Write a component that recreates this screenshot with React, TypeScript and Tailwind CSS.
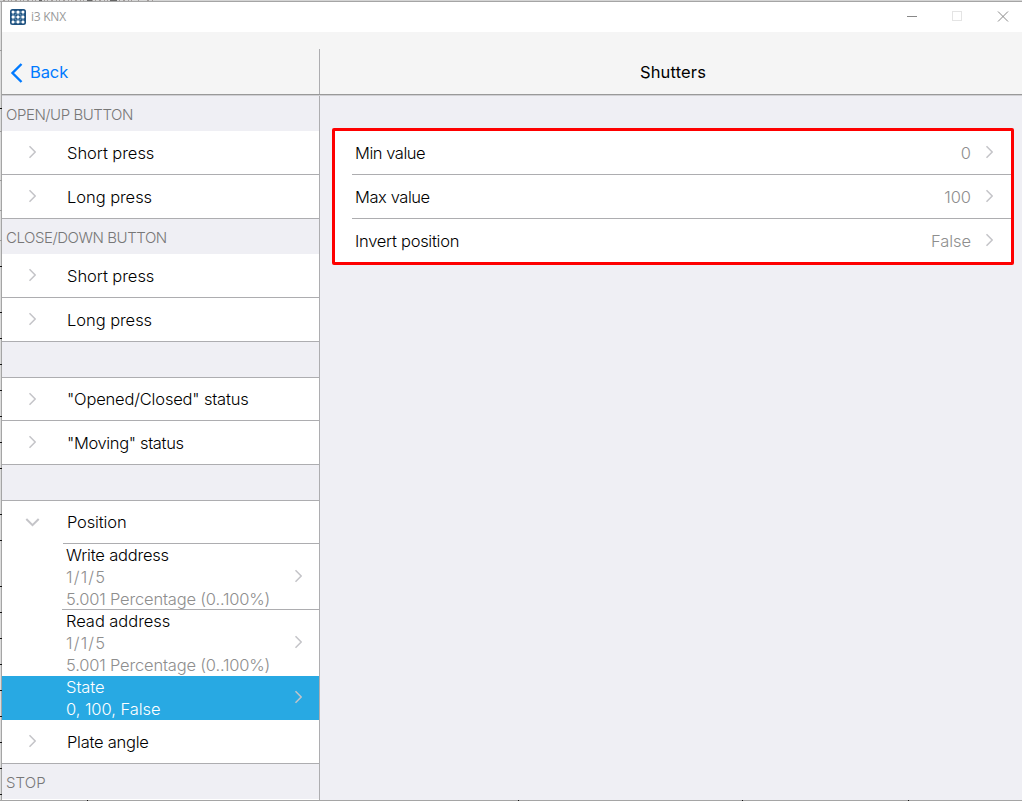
import React from "react";

const F = "font-['Inter',sans-serif] font-light";

function Chevron({ dir = "right", className = "" }: { dir?: "right" | "down"; className?: string }) {
  return dir === "right" ? (
    <svg width="8" height="14" viewBox="0 0 8 14" fill="none" className={"shrink-0 " + className}>
      <path d="M1.5 1.2 L7.2 7 L1.5 12.8" stroke="#c4c4c8" strokeWidth="1.5" />
    </svg>
  ) : (
    <svg width="15" height="9" viewBox="0 0 15 9" fill="none" className={"shrink-0 " + className}>
      <path d="M1.3 1 L7.5 7.2 L13.7 1" stroke="#c4c4c8" strokeWidth="2" />
    </svg>
  );
}

function Section({ title, className }: { title: string; className: string }) {
  return (
    <div className="flex h-[35px] shrink-0 items-center bg-[#efeff4] pl-1 text-[15px] text-[#777]">
      <span className={"pt-[3px] " + className}>{title}</span>
    </div>
  );
}

function Row({ label, className = "h-11", text = "pt-[2px]" }: { label: string; className?: string; text?: string }) {
  return (
    <div className={"flex shrink-0 items-center border-b border-[#adadb0] bg-white " + className}>
      <Chevron className="mb-px ml-[26px]" />
      <span className={"ml-[31px] text-black " + text}>{label}</span>
    </div>
  );
}

function Address({ title, titleClass, border }: { title: string; titleClass: string; border: string }) {
  return (
    <div className={"ml-[60px] flex h-[66px] shrink-0 items-center border-b bg-white leading-[22px] text-[#8e8e8e] " + border}>
      <div className="grow pl-1 pt-px">
        <div className={"text-black " + titleClass}>{title}</div>
        <div className="tracking-[1.2px]">1/1/5</div>
        <div className="tracking-[-0.18px]">5.001 Percentage (0..100%)</div>
      </div>
      <Chevron className="mb-px mr-[17px]" />
    </div>
  );
}

function Setting({ label, value, text, line = true }: { label: string; value: string; text: string; line?: boolean }) {
  return (
    <div className={"ml-[17px] flex h-11 items-center border-b pl-[3px] pr-[18px] " + (line ? "border-[#adadb0]" : "border-transparent")}>
      <span className={"grow pt-[2px] text-black " + text}>{label}</span>
      <span className="mr-[14px] pt-[2px] text-[#8e8e8e]">{value}</span>
      <Chevron className="mb-px" />
    </div>
  );
}

const ticks = [108, 266, 312, 338, 364, 390, 416, 442, 468, 514, 540, 586, 612, 638, 664, 690, 716, 742, 768, 794];
const faint = [50, 131, 180, 210, 240];

export default function App() {
  return (
    <div className={"flex h-[801px] w-[1022px] flex-col overflow-hidden bg-white text-[16.5px] tracking-[-0.05px] " + F}>
      <svg width="1022" height="2" className="block shrink-0" shapeRendering="crispEdges">
        <rect width="1022" height="1" fill="#d5d5d5" />
        <path d="M3 .5H132M138 .5h1M147 .5h8" stroke="#a09a98" strokeDasharray="2 3 1 2 1 3" />
        <path d="M39 .5h3M87 .5h5M110 .5h7" stroke="#666" />
        <rect y="1" width="1022" height="1" fill="#a5a5a5" />
      </svg>
      <div className="flex min-h-0 grow">
        <svg width="2" height="798" className="block shrink-0" shapeRendering="crispEdges">
          <rect width="1" height="798" fill="#dcdcdc" />
          <rect x="1" width="1" height="798" fill="#a5a5a5" />
          {ticks.map((y) => <rect key={y} y={y - 2} width="2" height="1" fill="#111" />)}
          {faint.map((y) => <rect key={y} y={y - 2} width="2" height="1" fill="#999" />)}
        </svg>
        <div className="flex min-w-0 grow flex-col">
          <div className="flex h-[30px] shrink-0 items-center bg-white pl-2">
            <svg width="16" height="16" viewBox="0 0 16 16" className="-mt-px">
              <rect width="16" height="16" rx="2.5" fill="#1f5280" />
              <path d="M3 3h10v10H3zM8 3v10M3 8h10" stroke="#7fa6c4" fill="none" />
              <circle cx="8" cy="8" r="3.6" stroke="#7fa6c4" strokeWidth="0.8" fill="none" />
              {[3, 8, 13].map((x) => [3, 8, 13].map((y) => <circle key={x + "-" + y} cx={x} cy={y} r="1.5" fill="#fff" />))}
            </svg>
            <span className="-mt-px ml-[5px] grow font-['Open_Sans',sans-serif] text-[12px] font-normal tracking-[-0.25px] text-[#999]">i3 KNX</span>
            <svg width="102" height="12" viewBox="0 0 102 12" fill="none" className="mr-[13px]" shapeRendering="crispEdges">
              <path d="M0 5.5h10" stroke="#888" />
              <path d="M45.5 .5h9v9h-9z" stroke="#e4e4e4" />
              <path d="M91 0.5L101 10.5M101 0.5L91 10.5" stroke="#888" shapeRendering="auto" />
            </svg>
          </div>
          <div className="h-[17px] shrink-0 bg-[#f5f5f5]" />
          <div className="flex h-[45px] shrink-0 bg-[#f5f5f5]">
            <div className="flex w-[318px] items-center border-r border-[#adadb0] pl-2 text-[#007aff]">
              <svg width="13" height="20" viewBox="0 0 13 20" fill="none" className="mt-[3px]">
                <path d="M11.5 1L2.5 10L11.5 19" stroke="#007aff" strokeWidth="2.4" />
              </svg>
              <span className="ml-[7px] pt-px font-normal tracking-[-0.1px]">Back</span>
            </div>
            <div className="flex grow items-center justify-center pt-px text-black"><span className="pl-[4px] font-normal tracking-[0.15px]">Shutters</span></div>
          </div>
          <div className="h-[2px] shrink-0 border-b border-[#d0d0d4] bg-[#999]" />
          <div className="flex min-h-0 grow">
            <div className="flex w-[318px] shrink-0 flex-col border-r border-[#adadb0] bg-white">
              <Section title="OPEN/UP BUTTON" className="tracking-[-0.45px]" />
              <Row label="Short press" />
              <Row label="Long press" />
              <Section title="CLOSE/DOWN BUTTON" className="tracking-[-0.45px]" />
              <Row label="Short press" />
              <Row label="Long press" />
              <div className="h-9 shrink-0 border-b border-[#adadb0] bg-[#efeff4]" />
              <Row label={'"Opened/Closed" status'} className="h-[43px]" text="pt-px tracking-[-0.18px]" />
              <Row label={'"Moving" status'} text="pt-[2px] tracking-[-0.35px]" />
              <div className="h-9 shrink-0 border-b border-[#adadb0] bg-[#efeff4]" />
              <div className="flex h-[43px] shrink-0 items-center">
                <Chevron dir="down" className="ml-[23px]" />
                <div className="ml-[23px] flex h-full grow items-center border-b border-[#adadb0] pl-1 tracking-[-0.15px] text-black">
                  <span className="pt-px">Position</span>
                </div>
              </div>
              <Address title="Write address" titleClass="tracking-[-0.2px]" border="border-[#adadb0]" />
              <Address title="Read address" titleClass="" border="border-white" />
              <div className="flex h-11 shrink-0 items-center bg-[#28a9e3] pb-px leading-[22px] text-white">
                <div className="grow pl-16">
                  <div>State</div>
                  <div>0, 100, False</div>
                </div>
                <Chevron className="mb-px mr-[17px]" />
              </div>
              <Row label="Plate angle" text="pt-[2px] tracking-[-0.25px]" />
              <Section title="STOP" className="tracking-[0.1px]" />
            </div>
            <div className="grow bg-[#efeff4] pl-3 pr-2 pt-8">
              <div className="h-[137px] rounded-[2px] border-[3px] border-[#fe0000] bg-white">
                <Setting label="Min value" value="0" text="tracking-[-0.45px]" />
                <Setting label="Max value" value="100" text="tracking-[-0.42px]" />
                <Setting label="Invert position" value="False" text="tracking-[-0.28px]" line={false} />
              </div>
            </div>
          </div>
        </div>
      </div>
      <svg width="1022" height="1" className="block shrink-0" shapeRendering="crispEdges">
        <rect width="1022" height="1" fill="#a5a5a5" />
        {[87, 518, 742, 908].map((x) => <rect key={x} x={x} width="1" height="1" fill="#111" />)}
      </svg>
    </div>
  );
}
